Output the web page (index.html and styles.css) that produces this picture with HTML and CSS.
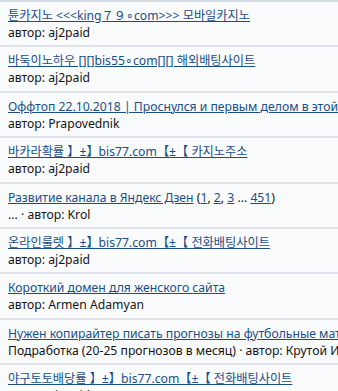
FILE: index.html
```html
<!DOCTYPE html>
<html lang="ru">
<head>
    <meta charset="UTF-8">
    <title>Последние темы</title>
    <link rel="stylesheet" href="styles.css">
</head>
<body>
    <ul class="topics">
        <li class="topic">
            <a href="#" class="title">튠카지노 &lt;&lt;&lt;king７９∘com&gt;&gt;&gt; 모바일카지노</a>
            <div class="meta">автор: aj2paid</div>
        </li>
        <li class="topic">
            <a href="#" class="title">바둑이노하우 [][]bis55∘com[][] 해외배팅사이트</a>
            <div class="meta">автор: aj2paid</div>
        </li>
        <li class="topic">
            <a href="#" class="title">Оффтоп 22.10.2018 | Проснулся и первым делом в этой теме</a>
            <div class="meta">автор: Prapovednik</div>
        </li>
        <li class="topic">
            <a href="#" class="title">바카라확률 】±】bis77.com【±【 카지노주소</a>
            <div class="meta">автор: aj2paid</div>
        </li>
        <li class="topic">
            <div class="line"><a href="#" class="title">Развитие канала в Яндекс Дзен</a> (<a href="#">1</a>, <a href="#">2</a>, <a href="#">3</a> ... <a href="#">451</a>)</div>
            <div class="meta">... · автор: Krol</div>
        </li>
        <li class="topic">
            <a href="#" class="title">온라인룰렛 】±】bis77.com【±【 전화배팅사이트</a>
            <div class="meta">автор: aj2paid</div>
        </li>
        <li class="topic">
            <a href="#" class="title">Короткий домен для женского сайта</a>
            <div class="meta">автор: Armen Adamyan</div>
        </li>
        <li class="topic">
            <a href="#" class="title">Нужен копирайтер писать прогнозы на футбольные матчи</a>
            <div class="meta">Подработка (20-25 прогнозов в месяц) · автор: Крутой Игрок</div>
        </li>
        <li class="topic">
            <a href="#" class="title">야구토토배당률 】±】bis77.com【±【 전화배팅사이트</a>
            <div class="meta">автор: aj2paid</div>
        </li>
    </ul>
</body>
</html>
```

FILE: styles.css
```css
body {
    margin: 0;
    background: #fafbfd;
    font-family: "Noto Sans", "Noto Sans CJK KR", sans-serif;
    font-size: 12.2px;
    color: #141414;
    overflow: hidden;
}

.topics {
    list-style: none;
    margin: 0;
    padding: 0;
    border-top: 2px solid #d5dbe2;
}

.topic {
    padding: 5px 8px 4.4px;
    border-bottom: 2px solid #dfe3e9;
    white-space: nowrap;
    overflow: hidden;
    line-height: 17px;
}

.topic a {
    color: #1a4e86;
}

.title {
    display: block;
}

.line .title {
    display: inline;
}

.meta {
    color: #141414;
}
```
